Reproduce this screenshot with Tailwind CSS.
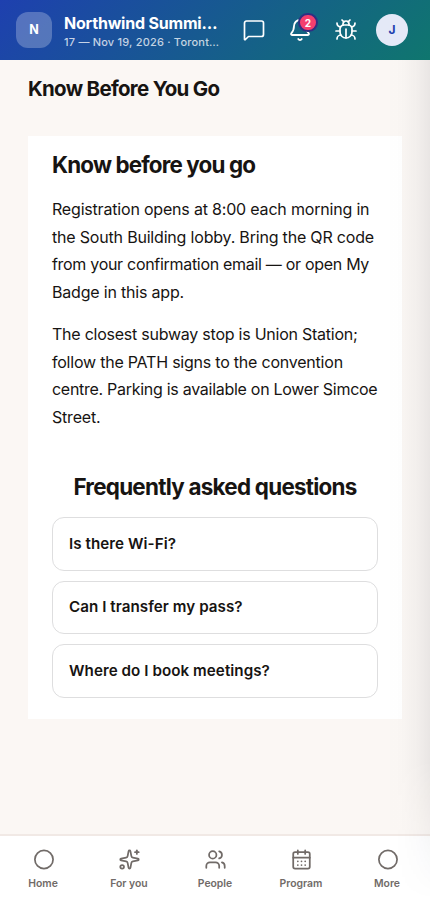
<!DOCTYPE html>
<html lang="en">
<head>
<meta charset="utf-8">
<meta name="viewport" content="width=device-width, initial-scale=1">
<title>Know Before You Go</title>
<script src="https://cdn.jsdelivr.net/npm/@tailwindcss/browser@4"></script>
</head>
<body class="font-[Inter,sans-serif] bg-[#fbf7f4] text-[#171412]">
<div class="relative flex h-[900px] w-[430px] flex-col overflow-hidden">
  <header class="relative z-20 flex h-[60px] shrink-0 items-center bg-[linear-gradient(135deg,#1e40af_0%,#0f766e_100%)] pl-4 pr-[22px] text-white">
    <div class="flex size-9 shrink-0 items-center justify-center rounded-[12px] bg-white/25 text-[12.500px] font-bold">N</div>
    <div class="ml-3 w-[155px] shrink-0 pt-[2px] whitespace-nowrap">
      <div class="text-[16px] leading-[20px] font-bold tracking-[-0.2px]">Northwind Summi…</div>
      <div class="mt-[2px] text-[11px] leading-[15px] font-medium tracking-[0.2px] text-white/75">17 — Nov 19, 2026 · Toront…</div>
    </div>
    <div class="ml-[23px] flex shrink-0 items-center gap-[22px]">
      <svg class="size-6" viewBox="0 0 24 24" fill="none" stroke="currentColor" stroke-width="1.7" stroke-linecap="round" stroke-linejoin="round"><path d="M21.500 16.500a2 2 0 0 1-2 2H6.500l-3.100 3a.5.5 0 0 1-.9-.4V5a2 2 0 0 1 2-2h15a2 2 0 0 1 2 2z"/></svg>
      <div class="relative">
        <svg class="size-6" viewBox="0 0 24 24" fill="none" stroke="currentColor" stroke-width="1.8" stroke-linecap="round" stroke-linejoin="round"><path d="M10.268 21a2 2 0 0 0 3.464 0"/><path d="M3.262 15.326A1 1 0 0 0 4 17h16a1 1 0 0 0 .740-1.673C19.410 13.956 18 12.499 18 8A6 6 0 0 0 6 8c0 4.499-1.411 5.956-2.738 7.326"/></svg>
        <span class="absolute -top-[5px] left-[10px] flex h-[19px] w-[20px] items-center justify-center rounded-full border-2 border-[#312e81] bg-[#f43f6e] text-[10px] font-bold leading-none">2</span>
      </div>
      <svg class="size-6" viewBox="0 0 24 24" fill="none" stroke="currentColor" stroke-width="1.7" stroke-linecap="round" stroke-linejoin="round"><path d="M12 20v-9"/><path d="M14 7a4 4 0 0 1 4 4v3a6 6 0 0 1-12 0v-3a4 4 0 0 1 4-4z"/><path d="m14.120 3.880 1.880-1.880"/><path d="M21 21a4 4 0 0 0-3.810-4"/><path d="M21 5a4 4 0 0 1-3.550 3.970"/><path d="M22 13h-4"/><path d="M3 21a4 4 0 0 1 3.810-4"/><path d="M3 5a4 4 0 0 0 3.550 3.970"/><path d="M6 13H2"/><path d="m8 2 1.880 1.880"/><path d="M9 7.130V6a3 3 0 1 1 6 0v1.130"/></svg>
    </div>
    <div class="ml-[18px] flex size-8 shrink-0 items-center justify-center rounded-full bg-[#e4e9f7] text-[12px] font-bold text-[#1e3fae]">J</div>
  </header>

  <main class="min-h-0 flex-1 px-7 pt-4">
    <h1 class="text-[20.500px] leading-[26px] font-bold tracking-[-0.7px]">Know Before You Go</h1>
    <article class="mt-[34px] h-[583px] bg-white px-6 pt-[14px]">
      <h2 class="text-[22.400px] leading-[30px] font-bold tracking-[-0.86px]">Know before you go</h2>
      <div class="mt-4 flex flex-col gap-[14.200px] text-[16px] leading-[27.700px] tracking-[-0.19px] whitespace-nowrap">
        <p>Registration opens at 8:00 each morning in<br>the South Building lobby. Bring the QR code<br><span class="tracking-[-0.3px]">from your confirmation email — or open My</span><br>Badge in this app.</p>
        <p><span class="tracking-[-0.24px]">The closest subway stop is Union Station;</span><br><span class="tracking-[-0.22px]">follow the PATH signs to the convention</span><br><span class="tracking-[-0.28px]">centre. Parking is available on Lower Simcoe</span><br>Street.</p>
      </div>
      <h2 class="mt-[40.300px] text-center text-[22.400px] leading-[30px] font-bold tracking-[-0.74px]">Frequently asked questions</h2>
      <div class="mt-[15px] flex flex-col gap-[10px] text-[15.200px] font-semibold tracking-[0.05px]">
        <div class="flex h-[53.500px] items-center rounded-[12px] border border-[#dededf] px-4 pt-px">Is there Wi-Fi?</div>
        <div class="flex h-[53.500px] items-center rounded-[12px] border border-[#dededf] px-4">Can I transfer my pass?</div>
        <div class="flex h-[53.500px] items-center rounded-[12px] border border-[#dededf] px-4 pt-px">Where do I book meetings?</div>
      </div>
    </article>
  </main>

  <nav class="grid h-[66px] shrink-0 grid-cols-5 border-t-2 border-[#f1e9e5] bg-white pt-3 text-[10.400px] leading-[14px] font-semibold text-[#716b68]">
    <div class="flex flex-col items-center gap-[6px]">
      <svg class="size-[23px]" viewBox="0 0 24 24" fill="none" stroke="currentColor" stroke-width="1.8"><circle cx="12.500" cy="12" r="9.500"/></svg>Home
    </div>
    <div class="flex flex-col items-center gap-[6px]">
      <svg class="size-[23px]" viewBox="-0.5 -0.5 25 25" fill="none" stroke="currentColor" stroke-width="1.9" stroke-linecap="round" stroke-linejoin="round"><path d="M11.017 2.814a1 1 0 0 1 1.966 0l1.051 5.558a2 2 0 0 0 1.594 1.594l5.558 1.051a1 1 0 0 1 0 1.966l-5.558 1.051a2 2 0 0 0-1.594 1.594l-1.051 5.558a1 1 0 0 1-1.966 0l-1.051-5.558a2 2 0 0 0-1.594-1.594l-5.558-1.051a1 1 0 0 1 0-1.966l5.558-1.051a2 2 0 0 0 1.594-1.594z"/><path d="M20 2v4"/><path d="M22 4h-4"/><circle cx="4" cy="20" r="2"/></svg>For you
    </div>
    <div class="flex flex-col items-center gap-[6px]">
      <svg class="size-[23px]" viewBox="-0.5 -0.5 25 25" fill="none" stroke="currentColor" stroke-width="1.9" stroke-linecap="round" stroke-linejoin="round"><path d="M16 21v-2a4 4 0 0 0-4-4H6a4 4 0 0 0-4 4v2"/><circle cx="9" cy="7" r="4"/><path d="M22 21v-2a4 4 0 0 0-3-3.870"/><path d="M16 3.130a4 4 0 0 1 0 7.750"/></svg>People
    </div>
    <div class="flex flex-col items-center gap-[6px]">
      <svg class="size-[23px]" viewBox="-0.5 -0.5 25 25" fill="none" stroke="currentColor" stroke-width="1.9" stroke-linecap="round" stroke-linejoin="round"><path d="M8 2v4M16 2v4"/><rect width="18" height="18" x="3" y="4" rx="2"/><path d="M3 10h18M8 14h.01M12 14h.01M16 14h.01M8 18h.01M12 18h.01M16 18h.01"/></svg>Program
    </div>
    <div class="flex flex-col items-center gap-[6px]">
      <svg class="size-[23px]" viewBox="0 0 24 24" fill="none" stroke="currentColor" stroke-width="1.8"><circle cx="12.500" cy="12" r="9.500"/></svg>More
    </div>
  </nav>
  <div class="pointer-events-none absolute top-[60px] right-0 bottom-0 z-10 w-11 bg-[linear-gradient(to_right,rgba(15,23,42,0)_0%,rgba(15,23,42,0.008)_35%,rgba(15,23,42,0.035)_70%,rgba(15,23,42,0.075)_100%)] [mask-image:linear-gradient(to_bottom,black_0px,black_700px,transparent_840px)]"></div>
</div>
</body>
</html>
